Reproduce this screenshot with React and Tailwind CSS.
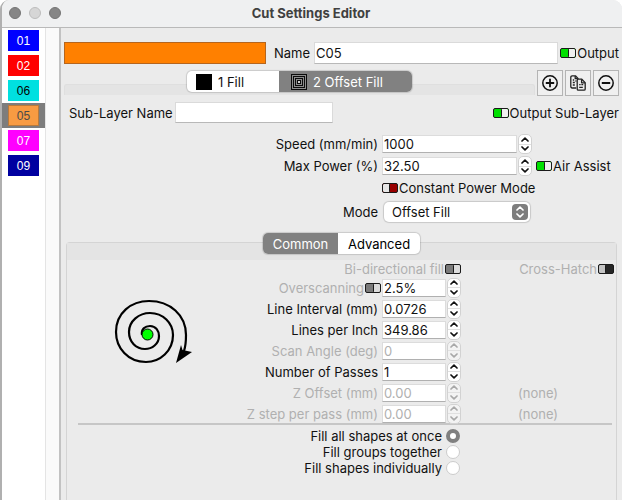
import React from "react";

const layers = [
  { id: "01", style: "bg-[#0000ff] text-white" },
  { id: "02", style: "bg-[#ff0000] text-white" },
  { id: "06", style: "bg-[#00e0e0] text-black" },
  { id: "05", style: "bg-[#f89b42] text-[#4a4a4a] border border-[#b97a3c]", selected: true },
  { id: "07", style: "bg-[#ff00ff] text-white" },
  { id: "09", style: "bg-[#0000a0] text-white" },
];

const toggleTones = {
  green: "bg-[#00e000] justify-end before:bg-[#f0f0f0] before:border-l",
  red: "bg-[#990000] justify-start before:bg-[#e6e6e6] before:border-r",
  gray: "bg-[#7a7a7a] justify-end before:bg-[#dcdcdc] before:border-l",
  dark: "bg-[#262626] justify-start before:bg-[#c4c4c4] before:border-r",
};

function Toggle({ id, tone, ...rest }) {
  return (
    <input
      id={id}
      type="checkbox"
      className={
        "flex h-[10px] w-4 shrink-0 appearance-none overflow-hidden rounded-[2px] border border-[#1a1a1a] before:block before:w-[7px] before:rounded-[1px] before:border-[#1a1a1a] before:content-[''] " +
        toggleTones[tone]
      }
      {...rest}
    />
  );
}

function Chevron({ up }) {
  return (
    <svg viewBox="0 0 8 5" className="h-[5px] w-2" fill="none" stroke="currentColor" strokeWidth="1.7" strokeLinecap="round" strokeLinejoin="round">
      <path d={up ? "M1 4 4 1.2 7 4" : "M1 1 4 3.8 7 1"} />
    </svg>
  );
}

function Spin({ id, value, disabled }) {
  return (
    <div className="flex min-w-0 items-center gap-px">
      <input
        id={id}
        defaultValue={value}
        disabled={disabled}
        className="h-[18px] w-full min-w-0 border border-[#dcdcdc] border-b-[#b0b0b0] bg-white px-px text-[13px] leading-4 disabled:text-[#b0b0b0]"
      />
      <div
        className={
          "flex h-5 w-[14px] shrink-0 flex-col overflow-hidden rounded-[5px] border border-[#d2d2d2] " +
          (disabled ? "bg-[#f3f3f3] text-[#a8a8a8]" : "bg-white text-[#111]")
        }
      >
        <button aria-label="Increase" disabled={disabled} className="flex flex-1 items-center justify-center border-b border-[#e0e0e0]">
          <Chevron up />
        </button>
        <button aria-label="Decrease" disabled={disabled} className="flex flex-1 items-center justify-center">
          <Chevron />
        </button>
      </div>
    </div>
  );
}

function TitleBar() {
  return (
    <header className="grid h-7 grid-cols-[1fr_auto_1fr] items-center border-b border-[#b9b9b9] bg-[#eff0f1] pr-[9px] pl-[7px] pb-[2px]">
      <div className="flex gap-2">
        <button aria-label="Close" className="size-3 rounded-full border border-[#747474] bg-[#868686]" />
        <button aria-label="Minimize" className="size-3 rounded-full border border-[#bcbcbc] bg-[#d6d6d6]" />
        <button aria-label="Zoom" className="size-3 rounded-full border border-[#747474] bg-[#868686]" />
      </div>
      <h1 className="text-[13px] font-bold text-[#404040]">Cut Settings Editor</h1>
    </header>
  );
}

function LayerList() {
  return (
    <aside className="flex w-[59px] shrink-0 border-r-2 border-[#c2c2c2] bg-[#fafafa]">
      <ul className="w-[44px] border-r border-[#e4e4e4] bg-white font-['Liberation_Sans',sans-serif]">
        {layers.map((l) => (
          <li key={l.id} className={"flex h-[25px] items-center pl-[6px] " + (l.selected ? "bg-[#7d7d7d]" : "")}>
            <button className={"flex h-[21px] w-[31px] items-center justify-center text-[12px] " + l.style}>{l.id}</button>
          </li>
        ))}
      </ul>
    </aside>
  );
}

function OffsetIcon() {
  return (
    <svg viewBox="0 0 16 16" className="size-4" fill="none" stroke="#8c8c8c">
      <rect width="16" height="16" fill="#0a0a0a" stroke="none" />
      <rect x="1.5" y="1.5" width="13" height="13" />
      <rect x="3.5" y="3.5" width="9" height="9" />
      <rect x="5.5" y="5.5" width="5" height="5" />
      <rect x="7" y="7" width="2" height="2" fill="#d0d0d0" stroke="none" />
    </svg>
  );
}

function CircleIcon({ plus }) {
  return (
    <svg viewBox="0 0 18 18" className="size-[18px]" fill="none" stroke="#111" strokeWidth="1.5">
      <circle cx="9" cy="9" r="7.2" />
      <path d={plus ? "M4.8 9h8.4M9 4.8v8.4" : "M4.8 9h8.4"} strokeWidth="1.8" />
    </svg>
  );
}

function CopyIcon() {
  return (
    <svg viewBox="0 0 18 18" className="size-[18px]" fill="none" stroke="#222" strokeWidth="1.3" strokeLinejoin="round">
      <path d="M7.2 14H3.2Q1.8 14 1.8 12.6V3.2Q1.8 1.8 3.2 1.8H6.4L9 4.4V5" />
      <path d="M6.2 2v2.6h2.6M3.8 6h1.4M3.8 8.5h2M3.8 11h2M6.4 7h1" />
      <path d="M8.2 6.2Q8.2 5.2 9.2 5.2H12.8L16.2 8.6V15Q16.2 16.2 15 16.2H9.4Q8.2 16.2 8.2 15Z" fill="#ececec" />
      <path d="M12.6 5.4v3.4h3.4M10.2 10.6h1.4M12.4 10.6h1.8M10.2 13.4h3.6" />
    </svg>
  );
}

function Spiral() {
  return (
    <svg viewBox="0 0 80 68" className="h-[68px] w-20" fill="none" stroke="#000" strokeWidth="2.2" aria-label="Offset fill preview">
      <path d="M30 36C29 30 33 27 38 27C44 27 47 32 47 37C47 45 40 50 33 50C24 50 17 43 17 33C17 22 27 14 38 14C51 14 61 24 61 36C61 52 48 63 34 63C16 63 4 49 4 33C4 14 19 2 37 2C58 2 74 16 74 36C74 43 74 46 72 52" />
      <path d="M69 46 70.5 51 80 53 64 64Z" fill="#000" stroke="none" />
      <circle cx="35.5" cy="35.5" r="5.5" fill="#00ff00" strokeWidth="1" />
    </svg>
  );
}

const params = [
  { id: "interval", label: "Line Interval (mm)", value: "0.0726" },
  { id: "lpi", label: "Lines per Inch", value: "349.86" },
  { id: "angle", label: "Scan Angle (deg)", value: "0", disabled: true },
  { id: "passes", label: "Number of Passes", value: "1" },
  { id: "zoffset", label: "Z Offset (mm)", value: "0.00", disabled: true, note: "(none)" },
  { id: "zstep", label: "Z step per pass (mm)", value: "0.00", disabled: true, note: "(none)" },
];

const modes = ["Fill all shapes at once", "Fill groups together", "Fill shapes individually"];

const rowGrid = "grid grid-cols-[1fr_79px_153px] items-center";
const formGrid = "grid h-[22px] grid-cols-[1fr_150px_83px] items-center gap-x-1";
const iconButton = "flex size-[26px] items-center justify-center border border-[#b4b4b4] bg-[#f0f0f0]";

function CommonPanel() {
  return (
    <section className="mx-[2px] flex flex-1 flex-col">
      <div role="tablist" className="relative z-10 flex h-[21px] self-center overflow-hidden rounded-[5px] bg-white shadow-[0_0_1px_1px_rgba(0,0,0,0.14)]">
        <button role="tab" aria-selected="true" className="w-[75px] bg-[#818181] text-white">Common</button>
        <button role="tab" className="w-[82px] text-black">Advanced</button>
      </div>
      <div className="-mt-3 flex-1 rounded-t-[4px] border border-b-0 border-[#d4d4d4] bg-[#ebebeb]">
        <div className="h-[17px] bg-[#e4e4e4]" />
        <div className="flex">
          <div className="flex w-[170px] shrink-0 items-center justify-center pb-[18px]">
            <Spiral />
          </div>
          <div className="flex-1 pr-[2px]">
            <div className={rowGrid + " h-[17px] text-[#b0b0b0]"}>
              <div className="col-span-2 flex items-center justify-end">
                <label htmlFor="bidi" className="pr-px">Bi-directional fill</label>
                <Toggle id="bidi" tone="gray" defaultChecked disabled />
              </div>
              <div className="flex items-center justify-end">
                <label htmlFor="cross" className="pr-px">Cross-Hatch</label>
                <Toggle id="cross" tone="dark" disabled />
              </div>
            </div>
            <div className={rowGrid + " h-[21px]"}>
              <div className="flex items-center justify-end pr-px text-[#b0b0b0]">
                <label htmlFor="overOn" className="pr-px">Overscanning</label>
                <Toggle id="overOn" tone="gray" defaultChecked disabled />
              </div>
              <Spin id="over" value="2.5%" />
            </div>
            {params.map((p) => (
              <div key={p.id} className={rowGrid + " h-[21px] " + (p.disabled ? "text-[#b0b0b0]" : "")}>
                <label htmlFor={p.id} className="pr-1 text-right">{p.label}</label>
                <Spin id={p.id} value={p.value} disabled={p.disabled} />
                {p.note && <span className="pl-[57px]">{p.note}</span>}
              </div>
            ))}
          </div>
        </div>
        <hr className="mr-1 -mt-px ml-[11px] h-[2px] border-0 bg-[#c6c6c6]" />
        <fieldset className="flex flex-col items-end pt-[3px] pr-[156px]">
          {modes.map((m, i) => (
            <label key={m} className="flex h-4 items-center gap-1">
              {m}
              <input
                type="radio"
                name="grouping"
                defaultChecked={i === 0}
                className="size-[14px] appearance-none rounded-full border border-[#cccccc] bg-white checked:border-4 checked:border-[#808080]"
              />
            </label>
          ))}
        </fieldset>
      </div>
    </section>
  );
}

export default function App() {
  return (
    <div className="flex min-h-screen flex-col overflow-hidden rounded-t-[9px] border-l-2 border-[#b0b0b0] bg-[#ebebeb] font-['Inter','Liberation_Sans',sans-serif] text-[13px] leading-4 whitespace-nowrap text-[#111]">
      <TitleBar />
      <div className="flex flex-1">
        <LayerList />
        <main className="flex min-w-0 flex-1 flex-col px-[3px] pt-[14px]">
          <div className="flex items-center">
            <div className="h-[22px] w-[202px] border border-[#b5651d] bg-[#ff8000]" />
            <label htmlFor="name" className="pl-2 pr-1">Name</label>
            <input id="name" defaultValue="C05" className="h-[22px] min-w-0 flex-1 border border-[#dadada] border-b-[#b8b8b8] bg-white px-px" />
            <label className="flex items-center gap-px pl-[2px]">
              <Toggle tone="green" defaultChecked />
              Output
            </label>
          </div>
          <div className="mt-[6px] flex gap-[2px]">
            <div className="flex flex-1 flex-col">
              <div role="tablist" className="relative z-10 mt-px flex h-[21px] self-center overflow-hidden rounded-[5px] bg-white shadow-[0_0_1px_1px_rgba(0,0,0,0.14)]">
                <button role="tab" className="flex w-[92px] items-center gap-[6px] pl-[9px]">
                  <span className="size-4 bg-black" />1 Fill
                </button>
                <button role="tab" aria-selected="true" className="flex w-[133px] items-center gap-[6px] bg-[#818181] pl-3 text-white">
                  <OffsetIcon />2 Offset Fill
                </button>
              </div>
              <div className="-mt-2 h-[11px] rounded-t-[3px] border-x border-t border-[#dfdfdf] bg-[#e4e4e4]" />
            </div>
            <button aria-label="Add sub-layer" className={iconButton}><CircleIcon plus /></button>
            <button aria-label="Duplicate sub-layer" className={iconButton}><CopyIcon /></button>
            <button aria-label="Remove sub-layer" className={iconButton}><CircleIcon /></button>
          </div>
          <div className="mt-[6px] flex items-center pl-[5px]">
            <label htmlFor="sub" className="pr-[2px]">Sub-Layer Name</label>
            <input id="sub" className="h-[21px] w-[158px] border border-[#dadada] border-b-[#b8b8b8] bg-white px-px" />
            <label className="ml-auto flex items-center gap-px">
              <Toggle tone="green" defaultChecked />
              Output Sub-Layer
            </label>
          </div>
          <div className="mt-[10px]">
            <div className={formGrid}>
              <label htmlFor="speed" className="text-right">Speed (mm/min)</label>
              <Spin id="speed" value="1000" />
            </div>
            <div className={formGrid}>
              <label htmlFor="power" className="text-right">Max Power (%)</label>
              <Spin id="power" value="32.50" />
              <label className="flex items-center gap-px">
                <Toggle tone="green" defaultChecked />
                Air Assist
              </label>
            </div>
            <div className={formGrid}>
              <label className="col-start-2 flex items-center gap-px">
                <Toggle tone="red" />
                Constant Power Mode
              </label>
            </div>
            <div className={formGrid + " mt-[2px]"}>
              <label htmlFor="mode" className="text-right">Mode</label>
              <div className="mx-[2px] grid items-center">
                <select id="mode" className="col-start-1 row-start-1 h-5 appearance-none rounded-[5px] bg-white pl-2 leading-4 shadow-[0_0_1px_1px_rgba(0,0,0,0.15)]">
                  <option>Offset Fill</option>
                </select>
                <span className="pointer-events-none col-start-1 row-start-1 mr-[2px] flex size-4 flex-col items-center justify-center gap-[2px] justify-self-end rounded-[4px] bg-[#7d7d7d] text-white">
                  <Chevron up />
                  <Chevron />
                </span>
              </div>
            </div>
          </div>
          <div className="mt-[10px] flex flex-1 flex-col">
            <CommonPanel />
          </div>
        </main>
      </div>
    </div>
  );
}
